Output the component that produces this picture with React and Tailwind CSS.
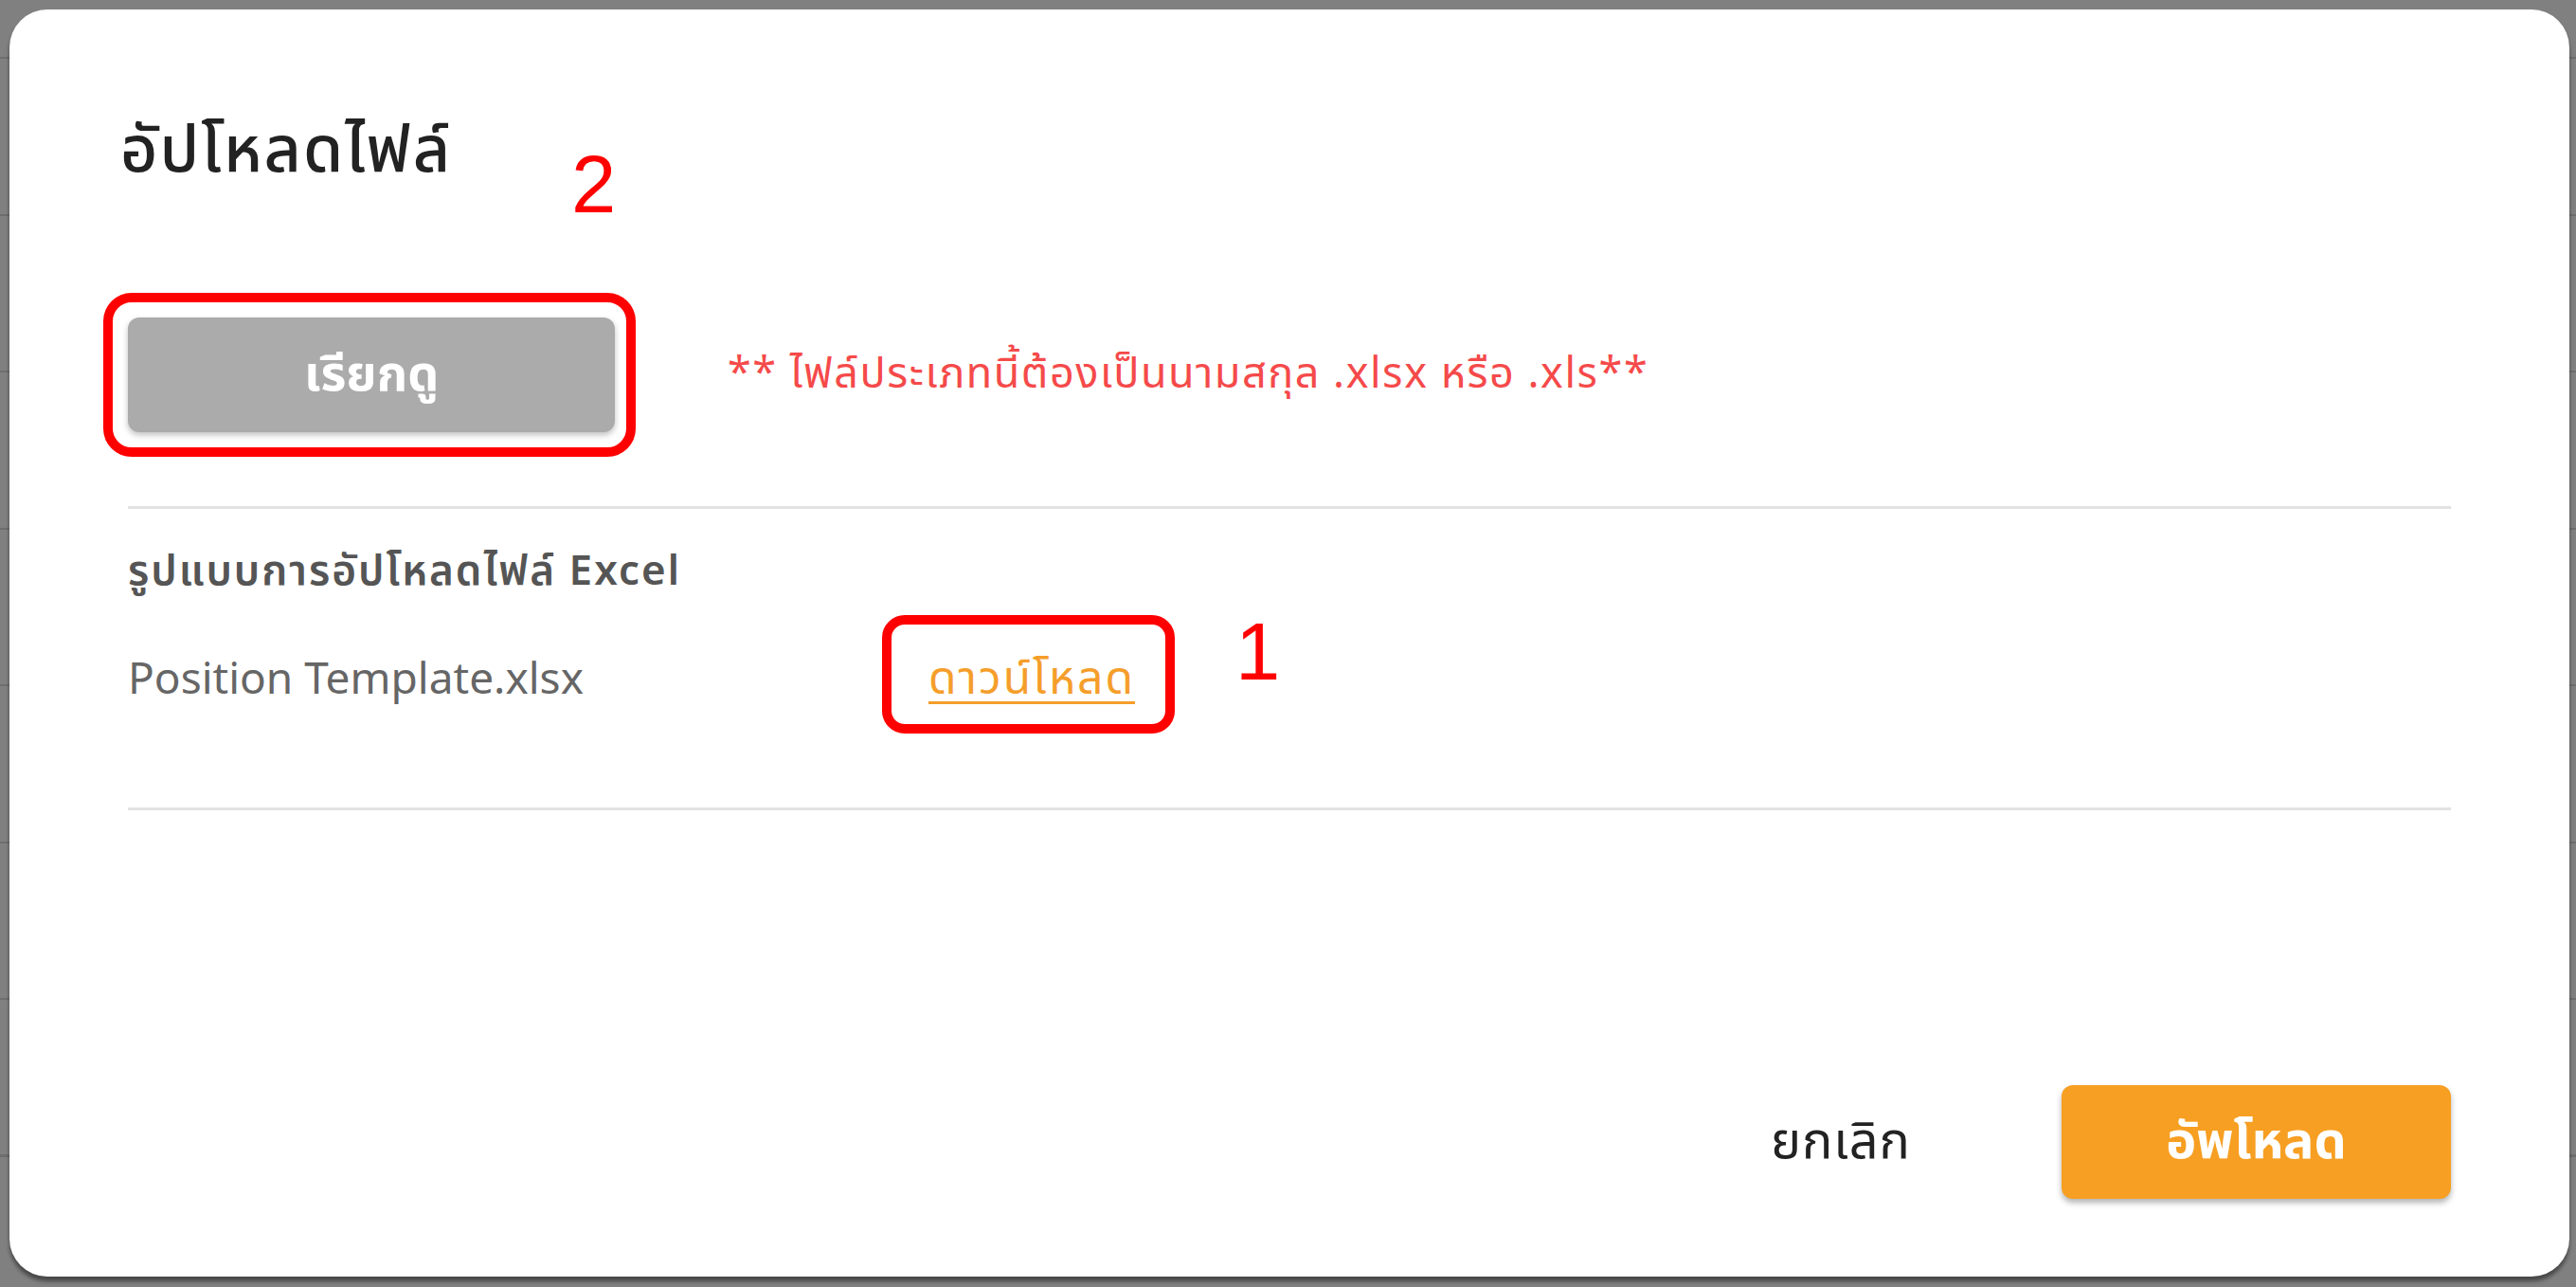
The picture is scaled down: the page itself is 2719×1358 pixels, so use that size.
export default function App() {
  return (
    <div className="relative w-[2719px] h-[1358px] overflow-hidden bg-[#808080] pt-[10px] pl-[10px] font-['Noto_Sans_Thai','Noto_Sans_Thai_UI','Noto_Sans',sans-serif]">
      <div className="absolute inset-0 bg-[repeating-linear-gradient(to_bottom,transparent_0px,transparent_60px,#6e6e6e_60px,#6e6e6e_62px,transparent_62px,transparent_165.5px)]" />
      <div className="relative w-[2702px] h-[1337px] rounded-[40px] bg-white shadow-[0_5px_4px_rgba(0,0,0,0.45)] px-[125px] flex flex-col">
        <div className="relative h-[250px]">
          <h2 className="absolute left-[-8px] top-[111px] text-[68px] leading-[80px] font-medium tracking-[2px] text-[#222222]">อัปโหลดไฟล์</h2>
          <span className="absolute left-[468px] top-[142px] text-[85px] leading-[85px] text-[#ff0000] font-['Liberation_Sans',sans-serif]">2</span>
        </div>

        <div className="relative flex items-center h-[121px] mt-[75px]">
          <button className="w-[514px] h-[121px] rounded-[12px] bg-[#ababab] shadow-[0_3px_6px_rgba(0,0,0,0.25)] text-white text-[52px] font-bold">เรียกดู</button>
          <span className="ml-[119px] text-[45px] tracking-[1.5px] text-[#f54a4a]">** ไฟล์ประเภทนี้ต้องเป็นนามสกุล .xlsx หรือ .xls**</span>
          <div className="absolute left-[-26px] top-[-26px] w-[562px] h-[173px] border-[10px] border-[#ff0000] rounded-[30px] pointer-events-none" />
        </div>

        <div className="h-[3px] bg-[#e2e2e2] mt-[78px]" />

        <div className="mt-[44px] h-[46px] flex items-center text-[44px] tracking-[2px] font-semibold text-[#555555]">รูปแบบการอัปโหลดไฟล์ Excel</div>

        <div className="relative mt-[68px] h-[46px] flex items-center text-[46px]">
          <span className="w-[845px] text-[#666666]">Position Template.xlsx</span>
          <a className="text-[#f59e2b] tracking-[2px] text-[48px] underline underline-offset-[8px] decoration-[3px]">ดาวน์โหลด</a>
          <div className="absolute left-[796px] top-[-46px] w-[309px] h-[125px] border-[10px] border-[#ff0000] rounded-[24px] pointer-events-none" />
          <span className="absolute left-[1169px] top-[-50px] text-[85px] leading-[85px] text-[#ff0000] font-['Liberation_Sans',sans-serif]">1</span>
        </div>

        <div className="h-[3px] bg-[#e2e2e2] mt-[111px]" />

        <div className="flex-1" />

        <div className="flex items-center justify-end mb-[82px]">
          <button className="h-[120px] px-[20px] text-[54px] tracking-[1px] text-[#222222] mr-[139px]">ยกเลิก</button>
          <button className="w-[411px] h-[120px] rounded-[12px] bg-[#f79f22] shadow-[0_4px_6px_rgba(0,0,0,0.3)] text-white text-[54px] font-bold">อัพโหลด</button>
        </div>
      </div>
    </div>
  );
}
